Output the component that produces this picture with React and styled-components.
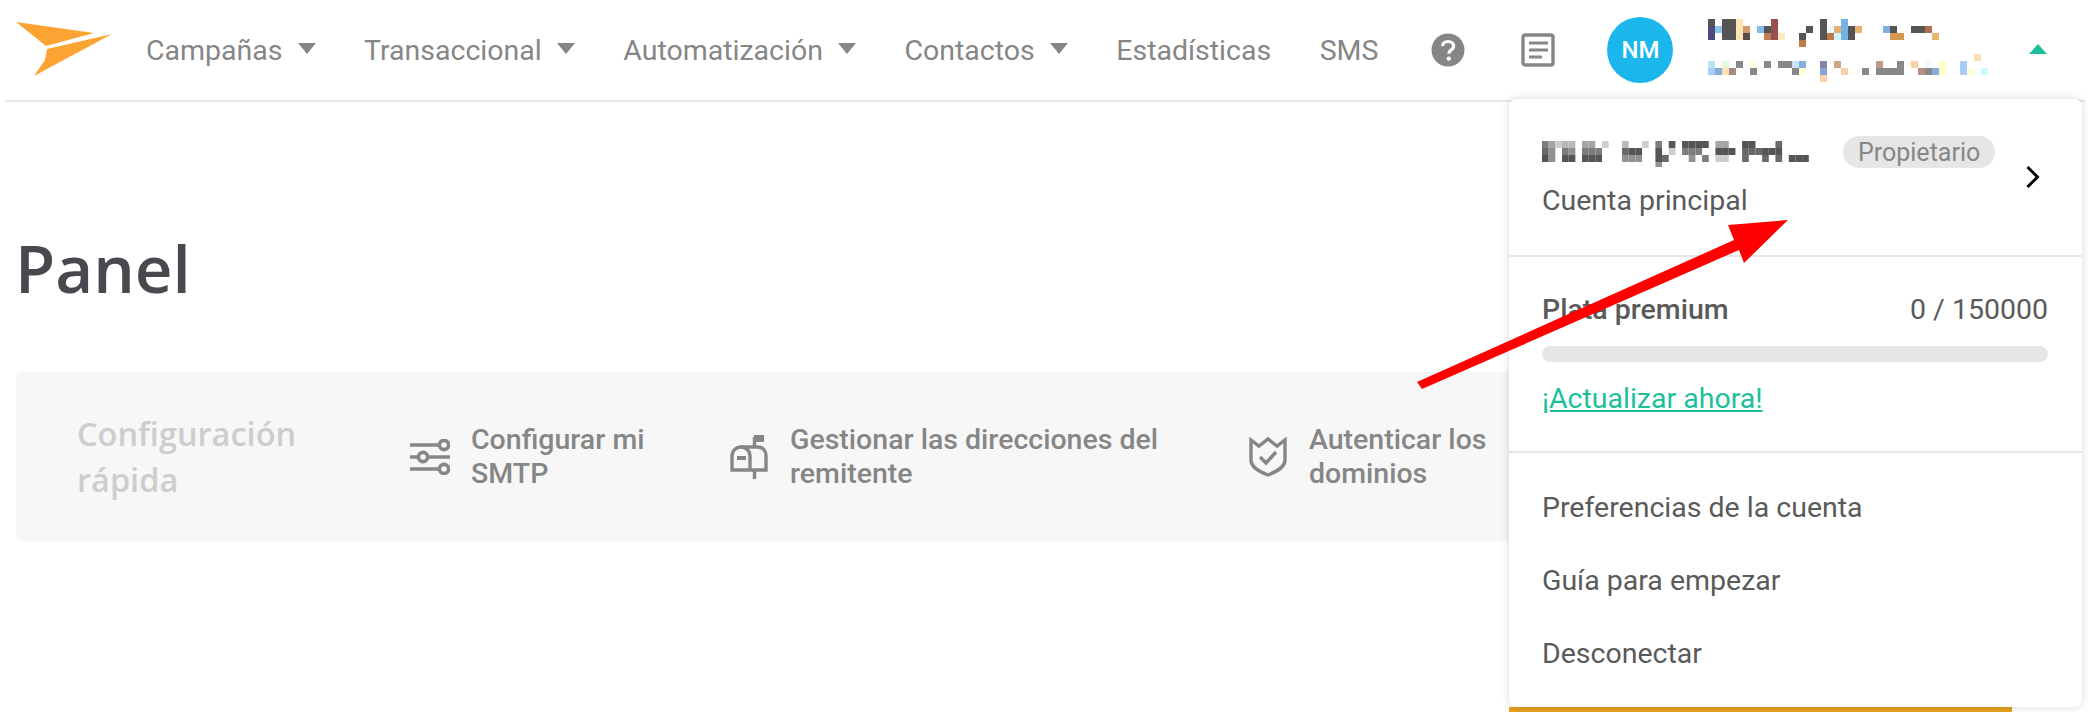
import React from "react";
import styled, { createGlobalStyle } from "styled-components";

const GlobalStyle = createGlobalStyle`
  html, body {
    margin: 0;
    padding: 0;
    background: #fff;
    font-family: "Roboto", "Liberation Sans", sans-serif;
  }
`;

// blurred account name / mail, cell = 7px
const nameCells = [
  [0, 0, "#555"], [2, 0, "#555"], [3, 0, "#555"], [4, 0, "#ffe5b5"], [9, 0, "#9a5050"], [16, 0, "#555"], [19, 0, "#74b2e8"],
  [0, 1, "#4a4a80"], [1, 1, "#8fc4ee"], [2, 1, "#555"], [3, 1, "#555"], [4, 1, "#ffe5b5"], [5, 1, "#cf9b66"],
  [7, 1, "#85bbe8"], [8, 1, "#555"], [9, 1, "#9a5050"], [14, 1, "#555"], [16, 1, "#555"], [17, 1, "#eef8fb"],
  [18, 1, "#e5b06e"], [19, 1, "#74b2e8"], [20, 1, "#555"], [21, 1, "#e8b274"], [25, 1, "#7fb0e0"], [26, 1, "#555"],
  [29, 1, "#555"], [30, 1, "#555"], [31, 1, "#b07050"],
  [0, 2, "#4a4a80"], [2, 2, "#555"], [3, 2, "#555"], [4, 2, "#ffe5b5"], [5, 2, "#5c4a4a"], [8, 2, "#c08050"],
  [9, 2, "#9a5050"], [10, 2, "#ffe9c0"], [13, 2, "#555"], [16, 2, "#555"], [17, 2, "#c07a48"], [18, 2, "#cdf4fb"],
  [19, 2, "#74b2e8"], [20, 2, "#555"], [26, 2, "#d39a50"], [27, 2, "#d39a50"], [32, 2, "#e8b670"],
  [13, 3, "#c07a48"],
];

const mailCells = [
  [38, 0, "#ffdcb0"],
  [0, 1, "#b8e4f5"], [2, 1, "#e0fcd8"], [4, 1, "#888"], [6, 1, "#ffffe0"], [8, 1, "#888"], [10, 1, "#888"], [11, 1, "#888"],
  [12, 1, "#c8e4fb"], [13, 1, "#85acdf"], [16, 1, "#8484a4"], [18, 1, "#cfa488"], [24, 1, "#c09a84"], [27, 1, "#888"],
  [29, 1, "#fbcfa8"], [31, 1, "#eefaff"], [33, 1, "#ffffc8"], [36, 1, "#a8ccf8"],
  [0, 2, "#a8ccf8"], [1, 2, "#85acdf"], [2, 2, "#ffe0b0"], [3, 2, "#a88888"], [6, 2, "#888"], [12, 2, "#888"], [13, 2, "#ffffd8"],
  [16, 2, "#85a4d8"], [19, 2, "#fcd0a8"], [22, 2, "#888"], [24, 2, "#888"], [25, 2, "#888"], [26, 2, "#888"], [27, 2, "#888"],
  [30, 2, "#b89080"], [31, 2, "#888"], [32, 2, "#85acdf"], [33, 2, "#ffffc8"], [36, 2, "#a8ccf8"], [37, 2, "#ffffd8"], [39, 2, "#ccfbff"],
  [16, 3, "#fcd0a8"],
];

// grey mosaic over the account number, 0 = blank, 9 = darkest
const accountRows = [
  "6423304402003002060808888044008800070000",
  "7506506660007880080206660088807778880000",
  "8508808880005550087000506022007007070888",
  "0000000000000000050000000000000000000000",
];

const Mosaic = ({ cells, width, height }) => (
  <svg width={width} height={height} viewBox={`0 0 ${width} ${height}`} shapeRendering="crispEdges">
    {cells.map(([x, y, c], i) => (
      <rect key={i} x={x * 7} y={y * 7} width="7" height="7" fill={c} />
    ))}
  </svg>
);

const AccountMosaic = () => (
  <svg width="270" height="26" viewBox="0 0 270 26">
    {accountRows.flatMap((row, y) =>
      row.split("").map((v, x) =>
        v === "0" ? null : (
          <rect
            key={`${x}-${y}`}
            x={x * 6.67}
            y={y * 7}
            width="6.67"
            height="7"
            fill={`rgb(${245 - v * 20},${245 - v * 20},${245 - v * 20})`}
          />
        )
      )
    )}
  </svg>
);

const Logo = () => (
  <svg width="98" height="56" viewBox="0 0 98 56">
    <polygon points="0,1 78,12 30,25" fill="#fba433" />
    <polygon points="96,13 31,28 29,39 18,55" fill="#fba433" />
  </svg>
);

const HelpIcon = () => (
  <svg width="34" height="34" viewBox="0 0 34 34">
    <circle cx="17" cy="17" r="16.5" fill="#868686" />
    <path d="M11.5 13.2c.3-3 2.6-4.7 5.6-4.7 3.2 0 5.5 1.9 5.5 4.6 0 2-1.1 3.1-2.6 4.1-1.4.9-2 1.6-2 3v.6" fill="none" stroke="#fff" strokeWidth="3.2" />
    <circle cx="17.8" cy="25.6" r="2.2" fill="#fff" />
  </svg>
);

const NotesIcon = () => (
  <svg width="34" height="34" viewBox="0 0 34 34">
    <rect x="2" y="2" width="30" height="30" rx="2" fill="none" stroke="#868686" strokeWidth="3.4" />
    <path d="M8 10h19M8 17h19M8 24h13" stroke="#868686" strokeWidth="3" />
  </svg>
);

const SlidersIcon = () => (
  <svg width="40" height="36" viewBox="0 0 40 36">
    <g fill="none" stroke="#868686" strokeWidth="3.6">
      <path d="M0 6h29M0 18h8M18 18h22M0 30h29" />
      <circle cx="34" cy="6" r="4.6" />
      <circle cx="13" cy="18" r="4.6" />
      <circle cx="34" cy="30" r="4.6" />
    </g>
  </svg>
);

const MailboxIcon = () => (
  <svg width="38" height="44" viewBox="0 0 38 44">
    <g fill="none" stroke="#868686" strokeWidth="3.4">
      <path d="M2 35V21a9 9 0 0 1 9-9h17a8 8 0 0 1 8 8v15z" />
      <path d="M20 35V21a9 9 0 0 0-9-9" />
      <path d="M24.5 2v10M24.5 35v9" />
    </g>
    <rect x="24" y="0" width="10" height="7" fill="#868686" />
    <rect x="7" y="21" width="9" height="4" fill="#868686" />
  </svg>
);

const ShieldIcon = () => (
  <svg width="38" height="42" viewBox="0 0 38 42">
    <path d="M2 4l8 6 9-7 9 7 8-6v20c0 7-7 11-17 15C9 35 2 31 2 24z" fill="none" stroke="#868686" strokeWidth="3.4" strokeLinejoin="miter" />
    <path d="M11 21l6 6 10-11" fill="none" stroke="#868686" strokeWidth="3.4" />
  </svg>
);

const ChevronIcon = () => (
  <svg width="16" height="24" viewBox="0 0 16 24">
    <path d="M2.5 2l10 10-10 10" fill="none" stroke="#000" strokeWidth="3" />
  </svg>
);

const RedArrow = () => (
  <ArrowSvg width="380" height="175" viewBox="1415 218 380 175">
    <polygon points="1417,382 1734,240 1728,225 1788,220 1744,263 1739,250 1422,389" fill="#ff0000" />
  </ArrowSvg>
);

const navItems = [
  { label: "Campañas", caret: true },
  { label: "Transaccional", caret: true },
  { label: "Automatización", caret: true },
  { label: "Contactos", caret: true },
  { label: "Estadísticas" },
  { label: "SMS" },
];

const setupItems = [
  { icon: <SlidersIcon />, lines: ["Configurar mi", "SMTP"], width: 320, gap: 21 },
  { icon: <MailboxIcon />, lines: ["Gestionar las direcciones del", "remitente"], width: 519, gap: 22 },
  { icon: <ShieldIcon />, lines: ["Autenticar los", "dominios"], width: 280, gap: 22 },
];

export default function App() {
  return (
    <Page>
      <GlobalStyle />
      <Header>
        <LogoSlot>
          <Logo />
        </LogoSlot>
        <Nav>
          {navItems.map((item) => (
            <NavItem key={item.label}>
              {item.label}
              {item.caret && <Caret />}
            </NavItem>
          ))}
        </Nav>
        <HelpSlot>
          <HelpIcon />
        </HelpSlot>
        <NotesSlot>
          <NotesIcon />
        </NotesSlot>
        <Avatar>NM</Avatar>
        <UserInfo>
          <Mosaic cells={nameCells} width={240} height={28} />
          <Mosaic cells={mailCells} width={290} height={28} />
        </UserInfo>
        <UpCaret />
      </Header>

      <Main>
        <Title>Panel</Title>
        <SetupCard>
          <SetupTitle>
            Configuración
            <br />
            rápida
          </SetupTitle>
          {setupItems.map((item) => (
            <SetupItem key={item.lines[0]} $width={item.width} $gap={item.gap}>
              {item.icon}
              <SetupLabel>
                {item.lines[0]}
                <br />
                {item.lines[1]}
              </SetupLabel>
            </SetupItem>
          ))}
        </SetupCard>
      </Main>

      <DropdownWrap>
        <Dropdown>
          <AccountSection>
            <AccountText>
              <AccountTop>
                <AccountMosaic />
                <Badge>Propietario</Badge>
              </AccountTop>
              <AccountKind>Cuenta principal</AccountKind>
            </AccountText>
            <ChevronIcon />
          </AccountSection>
          <PlanSection>
            <PlanRow>
              <PlanName>Plata premium</PlanName>
              <PlanCount>0 / 150000</PlanCount>
            </PlanRow>
            <ProgressBar />
            <UpgradeLink href="#">¡Actualizar ahora!</UpgradeLink>
          </PlanSection>
          <MenuSection>
            <MenuItem>Preferencias de la cuenta</MenuItem>
            <MenuItem>Guía para empezar</MenuItem>
            <MenuItem>Desconectar</MenuItem>
          </MenuSection>
        </Dropdown>
        <OrangeBar />
      </DropdownWrap>

      <RedArrow />
    </Page>
  );
}

const Page = styled.div`
  position: relative;
  width: 2088px;
  height: 712px;
  overflow: hidden;
  background: #fff;
`;

const Header = styled.header`
  display: flex;
  align-items: center;
  height: 100px;
  margin: 0 3px 0 5px;
  border-bottom: 2px solid #e6e6ea;
`;

const LogoSlot = styled.div`
  display: flex;
  margin-left: 11px;
  margin-top: -2px;
  width: 130px;
`;

const Nav = styled.nav`
  display: flex;
  align-items: center;
  gap: 48.5px;
`;

const NavItem = styled.div`
  display: flex;
  align-items: center;
  font-size: 28.5px;
  color: #868686;
  white-space: nowrap;
`;

const Caret = styled.span`
  display: inline-block;
  margin-left: 15px;
  margin-top: -3px;
  width: 0;
  height: 0;
  border-left: 9px solid transparent;
  border-right: 9px solid transparent;
  border-top: 11px solid #868686;
`;

const HelpSlot = styled.div`
  display: flex;
  margin-left: 53px;
`;

const NotesSlot = styled.div`
  display: flex;
  margin-left: 56px;
`;

const Avatar = styled.div`
  display: flex;
  align-items: center;
  justify-content: center;
  margin-left: 52px;
  width: 66px;
  height: 66px;
  border-radius: 50%;
  background: #1bb7ec;
  color: #fff;
  font-size: 24px;
  font-weight: 500;
`;

const UserInfo = styled.div`
  display: flex;
  flex-direction: column;
  gap: 7px;
  margin-left: 35px;
  width: 321px;
  svg {
    display: block;
  }
`;

const UpCaret = styled.span`
  width: 0;
  height: 0;
  margin-top: -2px;
  border-left: 9px solid transparent;
  border-right: 9px solid transparent;
  border-bottom: 10px solid #1dbf9b;
`;

const Main = styled.main`
  padding: 0 0 0 16px;
`;

const Title = styled.h1`
  margin: 0 0 0 -1px;
  padding-top: 122px;
  height: 148px;
  box-sizing: content-box;
  font-family: "Open Sans", sans-serif;
  font-size: 65.5px;
  line-height: 88px;
  font-weight: 600;
  color: #48484f;
`;

const SetupCard = styled.section`
  display: flex;
  align-items: center;
  width: 1700px;
  height: 169px;
  padding-left: 61px;
  box-sizing: border-box;
  background: #f7f7f7;
  border-radius: 5px;
`;

const SetupTitle = styled.div`
  width: 333px;
  flex: none;
  font-family: "Open Sans", sans-serif;
  font-size: 32.5px;
  line-height: 46px;
  font-weight: 600;
  color: #cdcdcd;
`;

const SetupItem = styled.div`
  display: flex;
  align-items: center;
  flex: none;
  width: ${(p) => p.$width}px;
  gap: ${(p) => p.$gap}px;
`;

const SetupLabel = styled.div`
  font-size: 28.5px;
  line-height: 34px;
  font-weight: 500;
  color: #868686;
  white-space: nowrap;
`;

const DropdownWrap = styled.div`
  position: absolute;
  top: 99px;
  left: 1509px;
  width: 573px;
`;

const Dropdown = styled.div`
  height: 608px;
  box-sizing: border-box;
  background: #fff;
  border-radius: 8px;
  box-shadow: 0 0 8px rgba(0, 0, 0, 0.16);
  color: #5a5a5a;
  position: relative;
`;

const OrangeBar = styled.div`
  width: 503px;
  height: 5px;
  background: #e8a020;
`;

const AccountSection = styled.div`
  display: flex;
  align-items: center;
  justify-content: space-between;
  height: 158px;
  padding: 0 41px 0 33px;
  box-sizing: border-box;
  border-bottom: 2px solid #e6e6e6;
`;

const AccountText = styled.div`
  display: flex;
  flex-direction: column;
`;

const AccountTop = styled.div`
  display: flex;
  align-items: center;
  gap: 31px;
  svg {
    display: block;
    width: 270px;
    margin-top: 4px;
  }
`;

const Badge = styled.span`
  display: inline-flex;
  align-items: center;
  height: 32px;
  padding: 0 15px;
  border-radius: 16px;
  background: #e6e6e6;
  color: #868686;
  font-size: 25px;
`;

const AccountKind = styled.div`
  margin-top: 16px;
  font-size: 28.5px;
  line-height: 34px;
`;

const PlanSection = styled.div`
  height: 196px;
  padding: 35px 34px 0 33px;
  box-sizing: border-box;
  border-bottom: 2px solid #e6e6e6;
`;

const PlanRow = styled.div`
  display: flex;
  justify-content: space-between;
  font-size: 28.5px;
  line-height: 36px;
`;

const PlanName = styled.span`
  font-weight: 500;
`;

const PlanCount = styled.span`
  font-weight: 400;
`;

const ProgressBar = styled.div`
  height: 16px;
  margin-top: 18px;
  border-radius: 8px;
  background: #e6e6e6;
`;

const UpgradeLink = styled.a`
  display: inline-block;
  margin-top: 19px;
  color: #1dbf9b;
  font-size: 28.5px;
  line-height: 36px;
`;

const MenuSection = styled.div`
  display: flex;
  flex-direction: column;
  padding: 18px 33px 0;
`;

const MenuItem = styled.div`
  height: 73px;
  display: flex;
  align-items: center;
  font-size: 28.5px;
`;

const ArrowSvg = styled.svg`
  position: absolute;
  left: 1415px;
  top: 218px;
`;
